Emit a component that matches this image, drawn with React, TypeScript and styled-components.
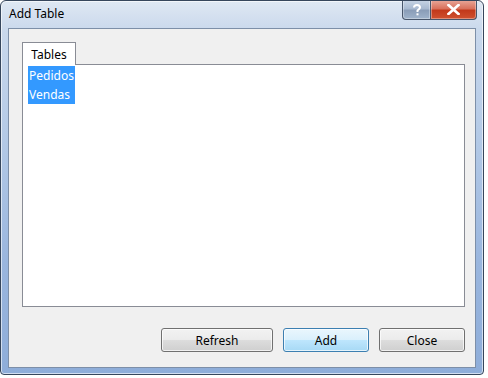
import React from "react";
import styled, { createGlobalStyle } from "styled-components";

const GlobalStyle = createGlobalStyle`
  html, body {
    margin: 0;
    padding: 0;
    background: #ffffff;
  }
  body {
    font-family: "Noto Sans", "Open Sans", "Liberation Sans", sans-serif;
    font-size: 12px;
  }
`;

const Frame = styled.div`
  box-sizing: border-box;
  width: 484px;
  height: 375px;
  display: flex;
  flex-direction: column;
  border: 1px solid #36465c;
  border-radius: 6px 6px 4px 4px;
  background: linear-gradient(
    to bottom,
    #dfe8f3 0px,
    #c9d8ec 30px,
    #b3c9e6 140px,
    #9ab6de 260px,
    #8eadd9 375px
  );
  box-shadow: inset 0 0 0 1px rgba(255, 255, 255, 0.6);
  overflow: hidden;
`;

const TitleBar = styled.div`
  height: 27px;
  display: flex;
  align-items: flex-start;
  flex-shrink: 0;
`;

const Title = styled.span`
  padding: 5px 0 0 8px;
  color: #000;
  line-height: 16px;
`;

const CaptionGroup = styled.div`
  margin-left: auto;
  margin-right: 6px;
  display: flex;
  margin-top: -1px;
`;

const CaptionButton = styled.div<{ $variant: "help" | "close" }>`
  box-sizing: border-box;
  width: ${(p) => (p.$variant === "close" ? "46px" : "29px")};
  height: 20px;
  display: flex;
  align-items: center;
  justify-content: center;
  border: 1px solid #48566b;
  border-top: none;
  border-left: ${(p) => (p.$variant === "close" ? "none" : "1px solid #48566b")};
  border-radius: ${(p) => (p.$variant === "close" ? "0 0 4px 0" : "0 0 0 4px")};
  background: ${(p) =>
    p.$variant === "close"
      ? "linear-gradient(to bottom, #e9a99b 0%, #d9715c 45%, #c2391b 55%, #d0512f 100%)"
      : "linear-gradient(to bottom, #c8d5e6 0%, #a9bad1 45%, #8a9db8 55%, #9fb3cb 100%)"};
  box-shadow: inset 0 0 0 1px rgba(255, 255, 255, 0.35);
  svg {
    display: block;
  }
`;

const Client = styled.div`
  flex: 1;
  margin: 0 7px 6px 7px;
  border: 1px solid #7d8fa8;
  background: #f0f0f0;
  display: flex;
  flex-direction: column;
  padding: 13px 10px 15px 13px;
`;

const TabStrip = styled.div`
  display: flex;
  position: relative;
  z-index: 1;
  margin-bottom: -1px;
`;

const Tab = styled.div`
  box-sizing: border-box;
  width: 54px;
  height: 23px;
  border: 1px solid #898c95;
  border-bottom: none;
  background: #ffffff;
  display: flex;
  align-items: center;
  justify-content: center;
  color: #000;
`;

const TabPane = styled.div`
  box-sizing: border-box;
  height: 243px;
  border: 1px solid #898c95;
  background: #ffffff;
  padding: 1px 5px;
  display: flex;
  flex-direction: column;
  align-items: flex-start;
`;

const ListItem = styled.div`
  box-sizing: border-box;
  width: 47px;
  height: 19px;
  padding-left: 1px;
  background: #3399ff;
  color: #ffffff;
  line-height: 19px;
  white-space: nowrap;
  overflow: hidden;
`;

const ButtonRow = styled.div`
  margin-top: auto;
  display: flex;
  justify-content: flex-end;
  gap: 10px;
`;

const Button = styled.div<{ $width: number; $default?: boolean }>`
  box-sizing: border-box;
  width: ${(p) => p.$width}px;
  height: 24px;
  border-radius: 3px;
  border: 1px solid ${(p) => (p.$default ? "#3c7fb1" : "#707070")};
  background: ${(p) =>
    p.$default
      ? "linear-gradient(to bottom, #eaf6fd 0%, #d9f0fc 50%, #bee6fd 50%, #a7d9f5 100%)"
      : "linear-gradient(to bottom, #f2f2f2 0%, #ebebeb 50%, #dddddd 50%, #cfcfcf 100%)"};
  box-shadow: inset 0 0 0 1px rgba(255, 255, 255, 0.7);
  display: flex;
  align-items: center;
  justify-content: center;
  color: #000;
`;

const App = () => {
  return (
    <>
      <GlobalStyle />
      <Frame>
        <TitleBar>
          <Title>Add Table</Title>
          <CaptionGroup>
            <CaptionButton $variant="help">
              <svg width="10" height="12" viewBox="0 0 10 12">
                <path
                  d="M2 3.5 C2 1.5 3.5 1 5 1 C7 1 8 2 8 3.5 C8 5 6 5.5 5.5 6.5 L5.5 8"
                  fill="none"
                  stroke="#ffffff"
                  strokeWidth="2"
                />
                <rect x="4.5" y="9.3" width="2" height="2" fill="#ffffff" />
              </svg>
            </CaptionButton>
            <CaptionButton $variant="close">
              <svg width="13" height="11" viewBox="0 0 13 11">
                <path
                  d="M1.5 1 L11.5 10 M11.5 1 L1.5 10"
                  stroke="#ffffff"
                  strokeWidth="2.6"
                  strokeLinecap="square"
                />
              </svg>
            </CaptionButton>
          </CaptionGroup>
        </TitleBar>
        <Client>
          <TabStrip>
            <Tab>Tables</Tab>
          </TabStrip>
          <TabPane>
            <ListItem>Pedidos</ListItem>
            <ListItem>Vendas</ListItem>
          </TabPane>
          <ButtonRow>
            <Button $width={112}>Refresh</Button>
            <Button $width={86} $default>
              Add
            </Button>
            <Button $width={86}>Close</Button>
          </ButtonRow>
        </Client>
      </Frame>
    </>
  );
};

export default App;
